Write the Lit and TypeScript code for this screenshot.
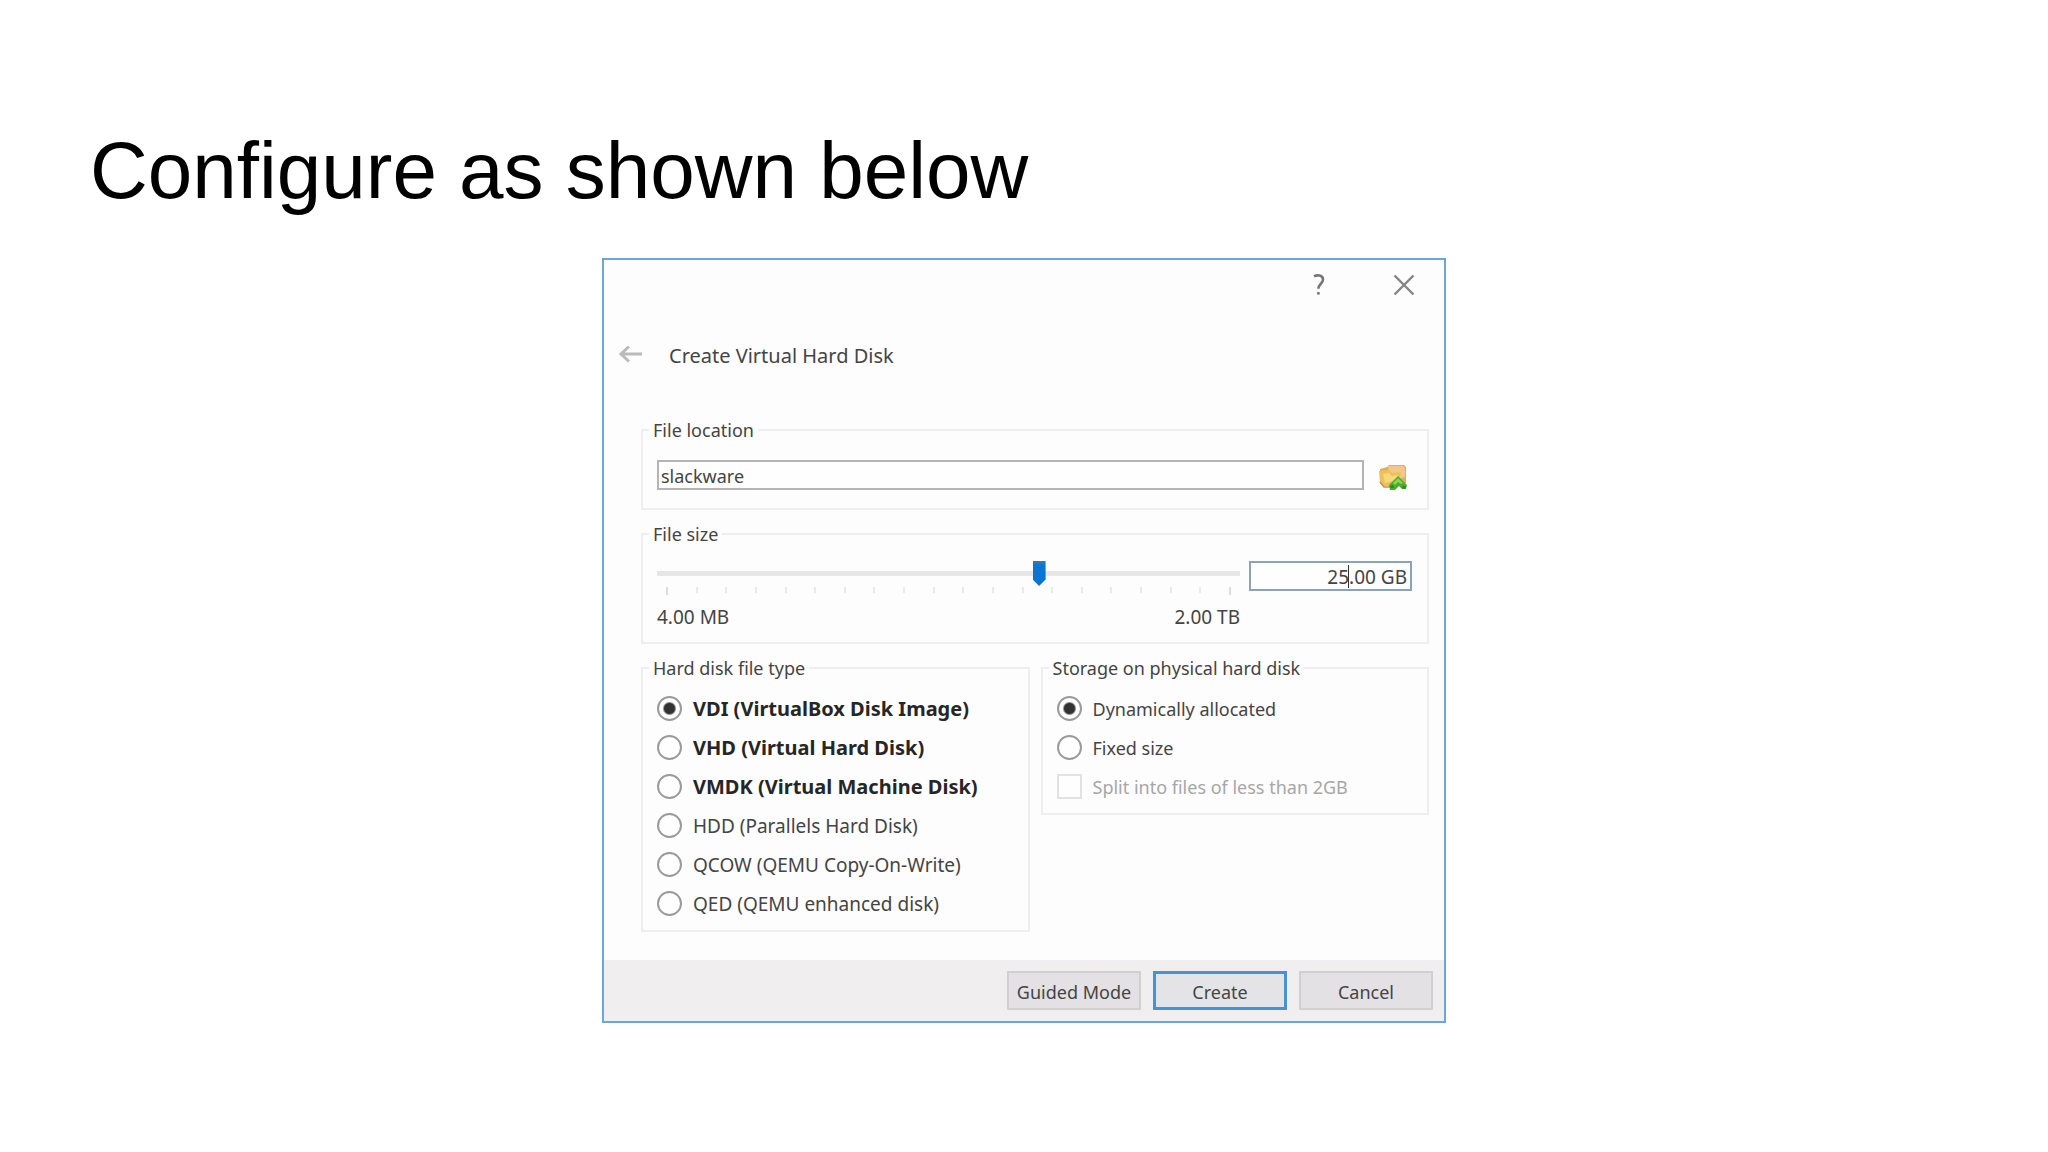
import { LitElement, html, css } from "lit";
import { customElement, property, state } from "lit/decorators.js";
import { classMap } from "lit/directives/class-map.js";

interface FileType {
  id: string;
  label: string;
  common: boolean;
}

const FILE_TYPES: FileType[] = [
  { id: "vdi", label: "VDI (VirtualBox Disk Image)", common: true },
  { id: "vhd", label: "VHD (Virtual Hard Disk)", common: true },
  { id: "vmdk", label: "VMDK (Virtual Machine Disk)", common: true },
  { id: "hdd", label: "HDD (Parallels Hard Disk)", common: false },
  { id: "qcow", label: "QCOW (QEMU Copy-On-Write)", common: false },
  { id: "qed", label: "QED (QEMU enhanced disk)", common: false },
];

const TICKS = Array.from({ length: 20 }, (_, i) => i);

@customElement("disk-dialog")
export class DiskDialog extends LitElement {
  @property() heading = "Create Virtual Hard Disk";
  @state() private fileType = "vdi";
  @state() private storage = "dynamic";

  static styles = css`
    :host {
      display: block;
      font-family: "Noto Sans", "Open Sans", sans-serif;
      font-size: 18px;
      line-height: 24px;
      color: #444444;
    }
    * {
      box-sizing: border-box;
    }
    button,
    input {
      font: inherit;
      color: inherit;
      margin: 0;
    }
    .window {
      display: flex;
      flex-direction: column;
      border: 2px solid #6ba6d6;
      background: #fdfdfd;
    }
    .bare {
      display: flex;
      align-items: center;
      justify-content: center;
      padding: 0;
      border: 0;
      background: none;
    }
    .titlebar {
      display: flex;
      justify-content: flex-end;
      gap: 5px;
    }
    .titlebar .bare {
      width: 80px;
      height: 50px;
    }
    .headline {
      display: flex;
      align-items: center;
      gap: 26px;
      padding: 30px 15px 46px;
    }
    h2 {
      margin: 0;
      font-size: 20px;
      font-weight: 400;
      line-height: 32px;
    }
    .body {
      display: grid;
      grid-template-columns: 1fr 1fr;
      align-items: start;
      gap: 12px 11px;
      padding: 0 15px 28px 37px;
    }
    fieldset {
      min-width: 0;
      margin: 0;
      padding: 9px 15px 7px 14px;
      border: 2px solid #eeeeee;
    }
    .wide {
      grid-column: 1 / -1;
    }
    .location {
      padding-block: 18px;
    }
    .size {
      padding-block: 15px 13px;
    }
    legend {
      margin-left: -8px;
      padding: 0 4px;
    }
    .line {
      display: flex;
      align-items: flex-start;
    }
    .location .line {
      gap: 14px;
    }
    .size .line {
      gap: 9px;
    }
    .field {
      height: 30px;
      padding: 2px 2px 0;
      border: 2px solid #b4b4b4;
      border-radius: 0;
      background: #fefefe;
      outline: none;
    }
    .path {
      flex: 1;
      min-width: 0;
    }
    .browse {
      width: 34px;
      height: 30px;
      justify-content: flex-start;
    }
    .scale {
      flex: 1;
      min-width: 0;
    }
    .slider {
      display: block;
      width: 100%;
      height: 25px;
      appearance: none;
      background: linear-gradient(#e6e6e6, #e6e6e6) center / 100% 5px no-repeat;
      outline: none;
    }
    .slider::-webkit-slider-thumb {
      appearance: none;
      width: 13px;
      height: 25px;
      background: linear-gradient(#3a78ac, #0a76d2 5px);
      clip-path: polygon(0 0, 100% 0, 100% 74%, 50% 100%, 0 74%);
    }
    .ticks {
      display: flex;
      justify-content: space-between;
      height: 8px;
      margin-top: 1px;
      padding: 0 9px;
    }
    .tick {
      width: 2px;
      height: 6px;
      background: #eaeaea;
    }
    .tick:first-child,
    .tick:last-child {
      height: 8px;
      background: #dddddd;
    }
    .ends {
      display: flex;
      justify-content: space-between;
      margin-top: 10px;
    }
    .ends,
    .amount,
    .types {
      font-size: 19px;
    }
    .amount {
      position: relative;
      width: 163px;
    }
    .amount .field {
      display: block;
      width: 100%;
      padding-right: 3px;
      border-color: #8aa3b8;
      text-align: right;
    }
    .caret {
      position: absolute;
      top: 4px;
      right: 63px;
      width: 1px;
      height: 23px;
      background: #333333;
    }
    .option {
      display: flex;
      align-items: center;
      gap: 11px;
      height: 39px;
      white-space: nowrap;
    }
    .option input {
      flex: none;
      appearance: none;
      width: 25px;
      height: 25px;
      border: 2px solid #9a9a9a;
      background: #fefefe;
    }
    .option input[type="radio"] {
      border-radius: 50%;
    }
    .option input[type="radio"]:checked {
      background: radial-gradient(circle, #333333 5px, #fefefe 7px);
    }
    .option input:disabled {
      border-color: #e2e2e2;
    }
    .common {
      font-size: 20px;
      font-weight: 700;
      color: #262626;
    }
    .off {
      color: #a6a6a6;
    }
    .footer {
      display: flex;
      justify-content: flex-end;
      gap: 12px;
      padding: 11px;
      background: #f0eeef;
    }
    .action {
      width: 134px;
      height: 39px;
      padding: 2px 0 0;
      border: 2px solid #d0d0d0;
      background: #e3e1e3;
    }
    .primary {
      border: 3px solid #4593d4;
      background: #e4e4e6;
    }
  `;

  private renderType(t: FileType) {
    return html`<label class=${classMap({ option: true, common: t.common })}>
      <input
        type="radio"
        name="file-type"
        .checked=${this.fileType === t.id}
        @change=${() => (this.fileType = t.id)}
      />${t.label}</label
    >`;
  }

  private renderStorage(id: string, label: string) {
    return html`<label class="option">
      <input
        type="radio"
        name="storage"
        .checked=${this.storage === id}
        @change=${() => (this.storage = id)}
      />${label}</label
    >`;
  }

  render() {
    return html`
      <section class="window" role="dialog" aria-labelledby="heading">
        <div class="titlebar">
          <button class="bare" aria-label="Help">
            <svg width="14" height="22" viewBox="0 0 14 22" fill="none" stroke="#777" stroke-width="2.6">
              <path d="M2 2.4C5 .8 11 .8 11 5.6c0 4-4.6 4.4-4.6 9.2" />
              <path d="M6.4 18v2.6" />
            </svg>
          </button>
          <button class="bare" aria-label="Close">
            <svg width="22" height="22" viewBox="0 0 22 22" fill="none" stroke="#858585" stroke-width="2.4">
              <path d="M1.5 1.5l19 19M20.5 1.5l-19 19" />
            </svg>
          </button>
        </div>
        <header class="headline">
          <button class="bare" aria-label="Back">
            <svg width="24" height="24" viewBox="0 0 24 24" fill="none" stroke="#bababa" stroke-width="3">
              <path d="M2 10h21M10 2.5L2 10l8 7.5" />
            </svg>
          </button>
          <h2 id="heading">${this.heading}</h2>
        </header>
        <div class="body">
          <fieldset class="wide location">
            <legend>File location</legend>
            <div class="line">
              <input class="field path" type="text" aria-label="File location" value="slackware" />
              <button class="bare browse" aria-label="Choose a location">
                <svg width="30" height="30" viewBox="0 0 30 30">
                  <path d="M2 9l7-2 2-2h15l2 2v16l-4 3H6l-4-3z" fill="#dfae5c" />
                  <path d="M10 6h15l2 2v9l-9 3-7-6z" fill="#f0c98a" />
                  <path d="M1 11l10-1 3 3 9-1-2 11-3 3H6l-4-3z" fill="#ecc05a" />
                  <path d="M5 14l6-1 3 3 6-1-2 5-11 3z" fill="#f6d878" />
                  <path d="M2 22l4 5h8" fill="none" stroke="#c0944a" stroke-width="1.5" />
                  <path d="M11 25l9-9 9 9-1 4h-4l-3-3-4 4h-5z" fill="#4fa830" />
                  <path d="M15 23l5-5 5 5-2 1-3-2-3 3z" fill="#86d84c" />
                  <path d="M12 26l3-1 1 3h-3zM25 26h3l-1 3-3-1z" fill="#2d8a2a" />
                </svg>
              </button>
            </div>
          </fieldset>
          <fieldset class="wide size">
            <legend>File size</legend>
            <div class="line">
              <div class="scale">
                <input
                  class="slider"
                  type="range"
                  aria-label="File size"
                  min="0"
                  max="1000"
                  value="659"
                />
                <div class="ticks">${TICKS.map(() => html`<span class="tick"></span>`)}</div>
                <div class="ends"><span>4.00 MB</span><span>2.00 TB</span></div>
              </div>
              <div class="amount">
                <input class="field" type="text" aria-label="Size" value="25.00 GB" />
                <span class="caret"></span>
              </div>
            </div>
          </fieldset>
          <fieldset>
            <legend>Hard disk file type</legend>
            <div class="types">${FILE_TYPES.map((t) => this.renderType(t))}</div>
          </fieldset>
          <fieldset>
            <legend>Storage on physical hard disk</legend>
            ${this.renderStorage("dynamic", "Dynamically allocated")}
            ${this.renderStorage("fixed", "Fixed size")}
            <label class="option off"
              ><input type="checkbox" disabled />Split into files of less than 2GB</label
            >
          </fieldset>
        </div>
        <footer class="footer">
          <button class="action">Guided Mode</button>
          <button class="action primary">Create</button>
          <button class="action">Cancel</button>
        </footer>
      </section>
    `;
  }
}

@customElement("app-root")
export class AppRoot extends LitElement {
  static styles = css`
    :host {
      display: block;
      box-sizing: border-box;
      min-height: 100vh;
      padding: 125px 90px 60px;
      background: #ffffff;
    }
    h1 {
      margin: 0 0 41px;
      font: 400 80px/92px "Liberation Sans", Arial, sans-serif;
      color: #000000;
    }
    disk-dialog {
      max-width: 844px;
      margin: 0 auto;
    }
  `;

  render() {
    return html`
      <h1>Configure as shown below</h1>
      <disk-dialog></disk-dialog>
    `;
  }
}
